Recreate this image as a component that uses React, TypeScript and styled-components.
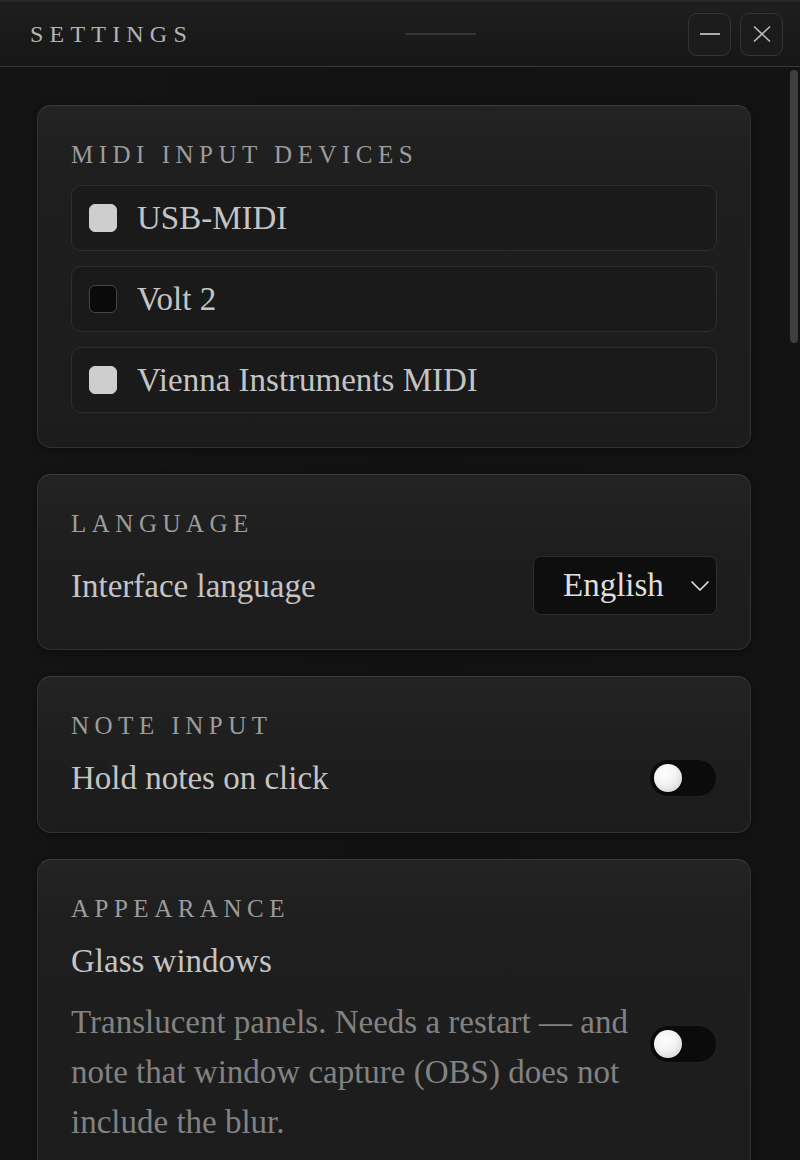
import React, { useState } from 'react';
import styled, { createGlobalStyle } from 'styled-components';
import { ChevronDown } from 'lucide-react';

const serif = `"Liberation Serif", "DejaVu Serif", serif`;

const devices = [
    { name: 'USB-MIDI', checked: true },
    { name: 'Volt 2', checked: false },
    { name: 'Vienna Instruments MIDI', checked: true },
];

const App = () => {
    const [checked, setChecked] = useState(devices.map((d) => d.checked));
    const [holdNotes, setHoldNotes] = useState(false);
    const [glass, setGlass] = useState(false);

    const toggleDevice = (i: number) =>
        setChecked((prev) => prev.map((c, j) => (j === i ? !c : c)));

    return (
        <>
            <GlobalStyle />
            <Window>
                <TitleBar>
                    <WindowTitle>Settings</WindowTitle>
                    <DragHandle />
                    <WindowButtons>
                        <WindowButton aria-label="Minimize">
                            <svg width="22" height="22" viewBox="0 0 22 22">
                                <line x1="1" y1="11" x2="21" y2="11" stroke="#bdbdbd" strokeWidth="1.8" />
                            </svg>
                        </WindowButton>
                        <WindowButton aria-label="Close">
                            <svg width="22" height="22" viewBox="0 0 22 22">
                                <path d="M3 3.5 L19 18.5 M19 3.5 L3 18.5" stroke="#bdbdbd" strokeWidth="1.6" fill="none" />
                            </svg>
                        </WindowButton>
                    </WindowButtons>
                </TitleBar>

                <Content>
                    <Scroller>
                        <Stack>
                            <Card>
                                <SectionTitle>MIDI Input Devices</SectionTitle>
                                <DeviceList>
                                    {devices.map((d, i) => (
                                        <DeviceRow key={d.name} onClick={() => toggleDevice(i)}>
                                            <Checkbox $checked={checked[i]} />
                                            <Label>{d.name}</Label>
                                        </DeviceRow>
                                    ))}
                                </DeviceList>
                            </Card>

                            <Card>
                                <SectionTitle>Language</SectionTitle>
                                <SettingRow>
                                    <Label>Interface language</Label>
                                    <Select role="combobox">
                                        <span>English</span>
                                        <ChevronDown size={32} strokeWidth={1.3} color="#dcdcdc" />
                                    </Select>
                                </SettingRow>
                            </Card>

                            <Card>
                                <SectionTitle>Note Input</SectionTitle>
                                <SettingRow>
                                    <Label>Hold notes on click</Label>
                                    <Toggle on={holdNotes} onClick={() => setHoldNotes(!holdNotes)} />
                                </SettingRow>
                            </Card>

                            <Card>
                                <SectionTitle>Appearance</SectionTitle>
                                <SettingRow>
                                    <TextColumn>
                                        <Label>Glass windows</Label>
                                        <Hint>
                                            Translucent panels. Needs a restart — and note that window
                                            capture (OBS) does not include the blur.
                                        </Hint>
                                    </TextColumn>
                                    <Toggle on={glass} onClick={() => setGlass(!glass)} />
                                </SettingRow>
                            </Card>
                        </Stack>
                    </Scroller>
                    <ScrollRail>
                        <ScrollThumb />
                    </ScrollRail>
                </Content>
            </Window>
        </>
    );
};

const Toggle = ({ on, onClick }: { on?: boolean; onClick?: () => void }) => (
    <Switch role="switch" aria-checked={!!on} $on={!!on} onClick={onClick}>
        <Knob />
    </Switch>
);

const GlobalStyle = createGlobalStyle`
    html, body {
        margin: 0;
        background: #131313;
    }

    body {
        font-family: ${serif};
        -webkit-font-smoothing: antialiased;
    }

    * {
        box-sizing: border-box;
    }
`;

const Window = styled.div`
    height: 1160px;
    display: flex;
    flex-direction: column;
    overflow: hidden;
    background: #131313;
`;

const TitleBar = styled.header`
    height: 67px;
    flex-shrink: 0;
    display: flex;
    align-items: center;
    justify-content: space-between;
    padding: 0 17px 0 30px;
    background: linear-gradient(180deg, #1e1e1e 0%, #1a1a1a 50%, #171717 100%);
    border-top: 2px solid #292929;
    border-bottom: 1px solid #363636;
`;

const WindowTitle = styled.h1`
    margin: 0;
    font-family: ${serif};
    font-weight: 400;
    font-size: 24px;
    line-height: 30px;
    letter-spacing: 6.2px;
    text-transform: uppercase;
    color: #b4b4b4;
`;

const DragHandle = styled.div`
    width: 71px;
    height: 2px;
    border-radius: 1px;
    background: #363636;
`;

const WindowButtons = styled.div`
    display: flex;
    gap: 9px;
`;

const WindowButton = styled.button`
    width: 43px;
    height: 43px;
    display: flex;
    align-items: center;
    justify-content: center;
    padding: 0;
    border: 1px solid #343434;
    border-radius: 9px;
    background: #1b1b1b;
    cursor: pointer;
`;

const Content = styled.div`
    flex: 1;
    min-height: 0;
    display: flex;
    background: linear-gradient(90deg, #141414 0%, #121212 50%, #131313 100%);
`;

const Scroller = styled.main`
    flex: 1;
    min-width: 0;
    overflow-y: auto;
    scrollbar-width: none;
`;

const ScrollRail = styled.div`
    width: 10px;
    flex-shrink: 0;
    padding: 3px 2px 0 0;
`;

const ScrollThumb = styled.div`
    height: 273px;
    border-radius: 4px;
    background: #3e3e3e;
`;

const Stack = styled.div`
    display: flex;
    flex-direction: column;
    gap: 26px;
    padding: 38px 39px 38px 37px;
`;

const Card = styled.section`
    padding: 34px 33px 34px;
    border: 1px solid #323232;
    border-top-color: #3c3c3c;
    border-radius: 14px;
    background: linear-gradient(180deg, #232323 0%, #1e1e1e 70px, #1c1c1c 100%);
    box-shadow: 0 2px 10px rgba(0, 0, 0, 0.35);
`;

const SectionTitle = styled.h2`
    margin: 0 0 15px;
    font-family: ${serif};
    font-weight: 400;
    font-size: 25px;
    line-height: 30px;
    letter-spacing: 5.5px;
    text-transform: uppercase;
    color: #9c9c9c;
`;

const DeviceList = styled.div`
    display: flex;
    flex-direction: column;
    gap: 15px;
`;

const DeviceRow = styled.label`
    height: 66px;
    display: flex;
    align-items: center;
    gap: 20px;
    padding: 0 17px;
    border: 1px solid #2e2e2e;
    border-radius: 10px;
    background: #1a1a1a;
    cursor: pointer;
`;

const Checkbox = styled.span<{ $checked: boolean }>`
    width: 28px;
    height: 28px;
    flex-shrink: 0;
    border-radius: 6px;
    background: ${({ $checked }) => ($checked ? '#cecece' : '#0a0a0a')};
    border: 1.5px solid ${({ $checked }) => ($checked ? '#cecece' : '#454545')};
`;

const Label = styled.span`
    font-size: 33px;
    line-height: 40px;
    color: #c4c4c4;
`;

const SettingRow = styled.div`
    display: flex;
    align-items: center;
    justify-content: space-between;
    gap: 8px;
    padding-top: 2px;
`;

const TextColumn = styled.div`
    flex: 1;
    display: flex;
    flex-direction: column;
`;

const Hint = styled.p`
    margin: 16px 0 0;
    font-size: 33px;
    line-height: 50px;
    color: #828282;
`;

const Select = styled.div`
    min-width: 184px;
    height: 59px;
    flex-shrink: 0;
    display: flex;
    align-items: center;
    justify-content: space-between;
    padding: 0 0 0 29px;
    border: 1px solid #2d2d2d;
    border-radius: 8px;
    background: #0e0e0e;
    font-size: 33px;
    color: #dedede;
    cursor: pointer;

    & > svg {
        margin-left: 18px;
        flex-shrink: 0;
    }
`;

const Switch = styled.button<{ $on: boolean }>`
    width: 68px;
    height: 38px;
    flex-shrink: 0;
    display: flex;
    align-items: center;
    justify-content: ${({ $on }) => ($on ? 'flex-end' : 'flex-start')};
    padding: 0 4px;
    border: 1px solid #202020;
    border-radius: 19px;
    background: ${({ $on }) => ($on ? '#3a3a3a' : '#0b0b0b')};
    cursor: pointer;
`;

const Knob = styled.span`
    width: 28px;
    height: 28px;
    border-radius: 50%;
    background: radial-gradient(circle at 40% 35%, #ffffff 0%, #f2f2f2 45%, #c9c9c9 100%);
    box-shadow: 0 1px 2px rgba(0, 0, 0, 0.5);
`;

export default App;
